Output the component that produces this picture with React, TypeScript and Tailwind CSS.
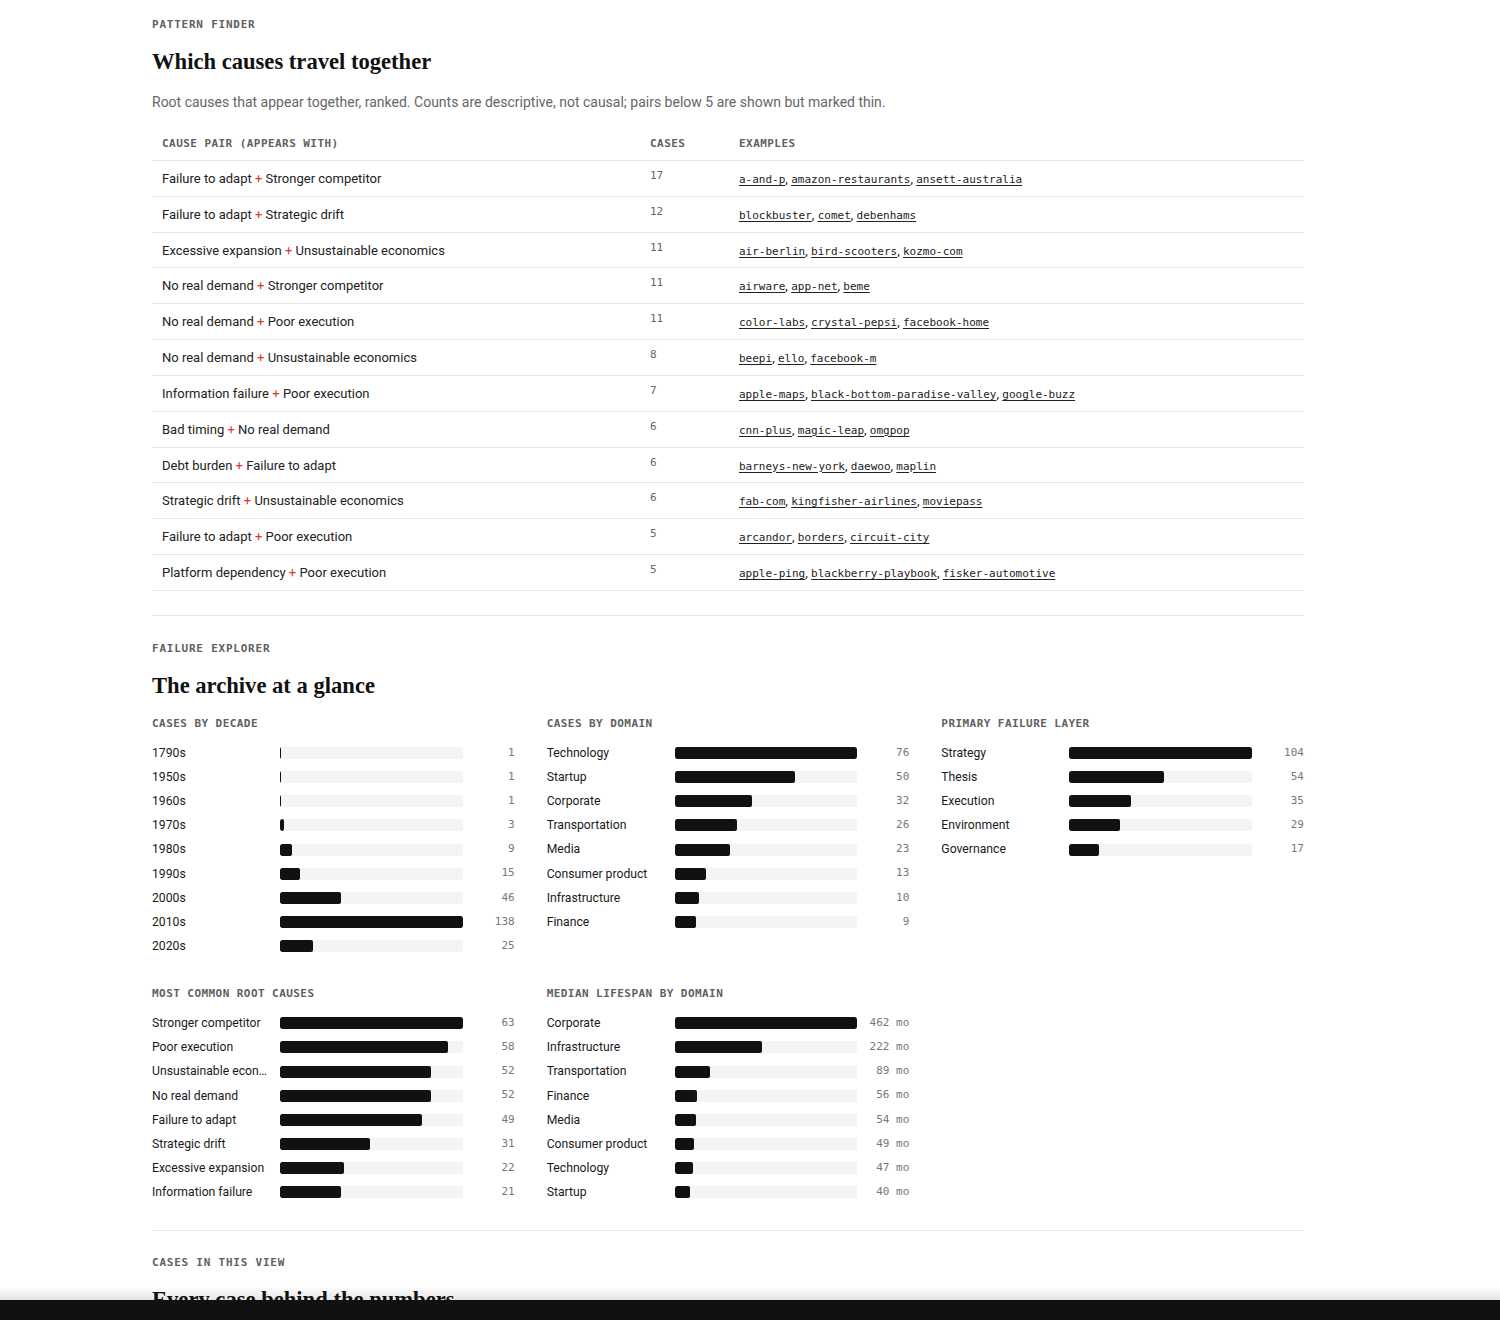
import React from 'react';

const SANS = "font-['Roboto',sans-serif]";
const MONO = "font-['DejaVu_Sans_Mono',monospace]";
const SERIF = "font-['Liberation_Serif',serif]";

type Pair = { a: string; b: string; cases: number; examples: string[] };

const pairs: Pair[] = [
  { a: 'Failure to adapt', b: 'Stronger competitor', cases: 17, examples: ['a-and-p', 'amazon-restaurants', 'ansett-australia'] },
  { a: 'Failure to adapt', b: 'Strategic drift', cases: 12, examples: ['blockbuster', 'comet', 'debenhams'] },
  { a: 'Excessive expansion', b: 'Unsustainable economics', cases: 11, examples: ['air-berlin', 'bird-scooters', 'kozmo-com'] },
  { a: 'No real demand', b: 'Stronger competitor', cases: 11, examples: ['airware', 'app-net', 'beme'] },
  { a: 'No real demand', b: 'Poor execution', cases: 11, examples: ['color-labs', 'crystal-pepsi', 'facebook-home'] },
  { a: 'No real demand', b: 'Unsustainable economics', cases: 8, examples: ['beepi', 'ello', 'facebook-m'] },
  { a: 'Information failure', b: 'Poor execution', cases: 7, examples: ['apple-maps', 'black-bottom-paradise-valley', 'google-buzz'] },
  { a: 'Bad timing', b: 'No real demand', cases: 6, examples: ['cnn-plus', 'magic-leap', 'omgpop'] },
  { a: 'Debt burden', b: 'Failure to adapt', cases: 6, examples: ['barneys-new-york', 'daewoo', 'maplin'] },
  { a: 'Strategic drift', b: 'Unsustainable economics', cases: 6, examples: ['fab-com', 'kingfisher-airlines', 'moviepass'] },
  { a: 'Failure to adapt', b: 'Poor execution', cases: 5, examples: ['arcandor', 'borders', 'circuit-city'] },
  { a: 'Platform dependency', b: 'Poor execution', cases: 5, examples: ['apple-ping', 'blackberry-playbook', 'fisker-automotive'] },
];

type Row = [string, number];
type Chart = { title: string; rows: Row[]; unit?: string };

const charts: (Chart | null)[] = [
  {
    title: 'Cases by decade',
    rows: [['1790s', 1], ['1950s', 1], ['1960s', 1], ['1970s', 3], ['1980s', 9], ['1990s', 15], ['2000s', 46], ['2010s', 138], ['2020s', 25]],
  },
  {
    title: 'Cases by domain',
    rows: [['Technology', 76], ['Startup', 50], ['Corporate', 32], ['Transportation', 26], ['Media', 23], ['Consumer product', 13], ['Infrastructure', 10], ['Finance', 9]],
  },
  {
    title: 'Primary failure layer',
    rows: [['Strategy', 104], ['Thesis', 54], ['Execution', 35], ['Environment', 29], ['Governance', 17]],
  },
  {
    title: 'Most common root causes',
    rows: [['Stronger competitor', 63], ['Poor execution', 58], ['Unsustainable economics', 52], ['No real demand', 52], ['Failure to adapt', 49], ['Strategic drift', 31], ['Excessive expansion', 22], ['Information failure', 21]],
  },
  {
    title: 'Median lifespan by domain',
    unit: 'mo',
    rows: [['Corporate', 462], ['Infrastructure', 222], ['Transportation', 89], ['Finance', 56], ['Media', 54], ['Consumer product', 49], ['Technology', 47], ['Startup', 40]],
  },
  null,
];

function Eyebrow({ children }: { children: React.ReactNode }) {
  return (
    <p className={`${MONO} text-[11px] leading-4 font-bold uppercase tracking-[0.07em] text-[#606060]`}>
      {children}
    </p>
  );
}

function Heading({ children }: { children: React.ReactNode }) {
  return (
    <h2 className={`${SERIF} mt-[15px] text-[22.6px] leading-7 font-bold text-[#111]`}>{children}</h2>
  );
}

function BarChart({ chart }: { chart: Chart }) {
  const max = Math.max(...chart.rows.map(r => r[1]));
  return (
    <div>
      <p className={`${MONO} text-[11px] leading-4 font-bold uppercase tracking-[0.04em] text-[#606060] mb-[9px]`}>
        {chart.title}
      </p>
      <div className="flex flex-col">
        {chart.rows.map(([label, value]) => (
          <div key={label} className="grid grid-cols-[128px_1fr_52px] items-center h-[24.15px]">
            <span className={`${SANS} text-[12.2px] text-[#1a1a1a] truncate pr-2`}>{label}</span>
            <div className="h-3 rounded-[2px] bg-[#f4f4f2] overflow-hidden">
              <div
                className="h-full rounded-[2px] bg-[#111]"
                style={{ width: `${Math.max((value / max) * 100, 0.8)}%` }}
              />
            </div>
            <span className={`${MONO} text-[11px] text-right text-[#777] whitespace-pre`}>
              {value}{chart.unit ? ` ${chart.unit}` : ''}
            </span>
          </div>
        ))}
      </div>
    </div>
  );
}

export default function App() {
  return (
    <div className="min-h-screen bg-white">
      <main className="w-[1152px] ml-[152px] pt-[17px] pb-24">

        {/* Pattern finder */}
        <section>
          <Eyebrow>Pattern finder</Eyebrow>
          <Heading>Which causes travel together</Heading>
          <p className={`${SANS} mt-[16px] text-[14px] leading-5 text-[#666]`}>
            Root causes that appear together, ranked. Counts are descriptive, not causal; pairs below 5 are shown but marked thin.
          </p>

          <div className="mt-4">
            <div className={`grid grid-cols-[488px_89px_1fr] border-b border-[#e6e6e6] ${MONO} text-[11px] leading-4 font-bold uppercase tracking-[0.04em] text-[#606060]`}>
              <div className="px-[10px] pt-2 pb-[8px]">Cause pair (appears with)</div>
              <div className="px-[10px] pt-2 pb-[8px]">Cases</div>
              <div className="px-[10px] pt-2 pb-[8px]">Examples</div>
            </div>
            {pairs.map(p => (
              <div key={p.a + p.b} className="grid grid-cols-[488px_89px_1fr] h-[35.83px] border-b border-[#e6e6e6]">
                <div className={`${SANS} px-[10px] pt-2 text-[13px] leading-[19px] text-[#222]`}>
                  {p.a} <span className="text-[#d8392b]">+</span> {p.b}
                </div>
                <div className={`${MONO} px-[10px] pt-[7px] text-[11px] leading-4 text-[#666]`}>{p.cases}</div>
                <div className={`${SANS} px-[10px] pt-2 text-[13px] leading-[19px] text-[#222]`}>
                  {p.examples.map((ex, i) => (
                    <React.Fragment key={ex}>
                      {i > 0 && ', '}
                      <a className={`${MONO} text-[11px] leading-none underline underline-offset-2 decoration-[#222]`}>{ex}</a>
                    </React.Fragment>
                  ))}
                </div>
              </div>
            ))}
          </div>
        </section>

        {/* Failure explorer */}
        <section className="mt-6 border-t border-[#e6e6e6] pt-[25px]">
          <Eyebrow>Failure explorer</Eyebrow>
          <Heading>The archive at a glance</Heading>
          <div className="mt-4 grid grid-cols-3 gap-x-8 gap-y-[28px]">
            {charts.map((c, i) => (c ? <BarChart key={c.title} chart={c} /> : <div key={i} />))}
          </div>
        </section>

        {/* Case list */}
        <section className="mt-[26px] border-t border-[#e6e6e6] pt-6">
          <Eyebrow>Cases in this view</Eyebrow>
          <Heading>Every case behind the numbers</Heading>
        </section>
      </main>

      {/* Bottom bar with soft fade above */}
      <div className="fixed inset-x-0 bottom-0">
        <div className="h-[14px] bg-gradient-to-b from-transparent to-black/10" />
        <div className="h-5 bg-[#111]" />
      </div>
    </div>
  );
}
